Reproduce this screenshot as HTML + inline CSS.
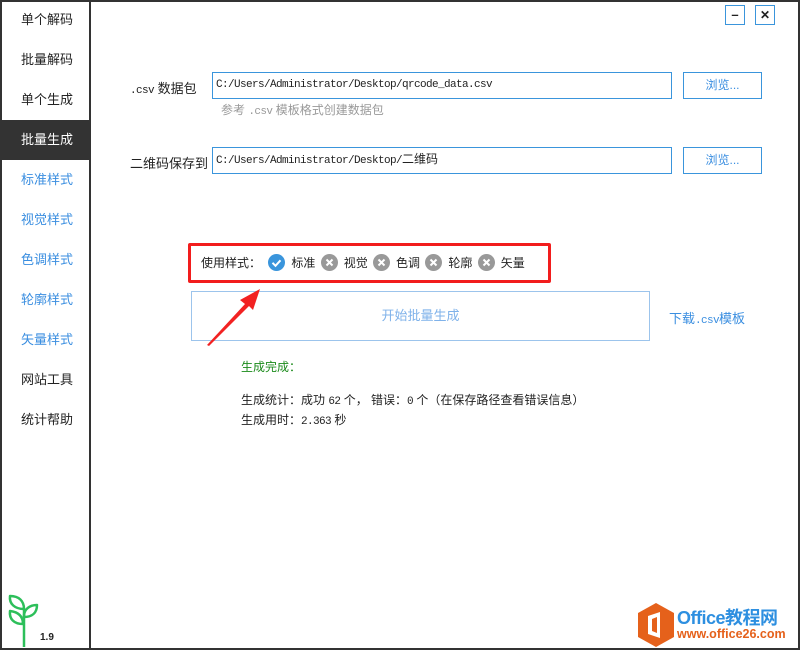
<!DOCTYPE html>
<html><head><meta charset="utf-8"><style>
*{margin:0;padding:0;box-sizing:border-box}
body{width:800px;height:650px;overflow:hidden;background:#fff;font-family:"Liberation Sans","Noto Sans CJK SC",sans-serif;font-size:13px;color:#222;position:relative}
.frame{position:absolute;left:0;top:0;width:800px;height:650px;border:2px solid #333}
.side{position:absolute;left:0;top:0;width:91px;height:650px;border-right:2px solid #333}
.it{position:absolute;left:0;width:89px;height:40px;line-height:40px;padding-left:21px;font-size:13px}
.sel{background:#333;color:#fff}
.blue{color:#3a8ee0}
.a{position:absolute}
.inp{position:absolute;left:212px;width:460px;height:27px;border:1px solid #3a95dc;font-family:"Liberation Mono","Noto Sans CJK SC",monospace;font-size:11px;letter-spacing:-0.6px;line-height:25px;padding-left:3px}
.inp .z{font-size:12px;letter-spacing:0}
.btn{position:absolute;left:683px;width:79px;height:27px;border:1px solid #3a95dc;color:#3a8ee0;text-align:center;line-height:25px;font-size:12px}
.ic{display:inline-block;width:17px;height:17px;border-radius:50%;vertical-align:middle;margin-right:6px;position:relative;top:-1px}
.g{background:#999}
.mono{font-family:"Liberation Mono","Noto Sans CJK SC",monospace;font-size:11px;letter-spacing:-0.6px}
</style></head><body>
<div class="frame"></div>
<div class="side">
<div class="it" style="top:0">单个解码</div>
<div class="it" style="top:40px">批量解码</div>
<div class="it" style="top:80px">单个生成</div>
<div class="it sel" style="top:120px">批量生成</div>
<div class="it blue" style="top:160px">标准样式</div>
<div class="it blue" style="top:200px">视觉样式</div>
<div class="it blue" style="top:240px">色调样式</div>
<div class="it blue" style="top:280px">轮廓样式</div>
<div class="it blue" style="top:320px">矢量样式</div>
<div class="it" style="top:360px">网站工具</div>
<div class="it" style="top:400px">统计帮助</div>
<svg class="a" style="left:6px;top:593px" width="34" height="54" viewBox="0 0 34 54"><g fill="none" stroke="#2dbf5a" stroke-width="2.5" stroke-linejoin="round"><path d="M18 54V16"/><path d="M18 16C18 8 13 3 4 3C3 11 9 16 18 16Z"/><path d="M18 23C18 16 24 12 31 12C31 20 26 24 18 24Z"/><path d="M17 31C17 23 12 19 4 18C3 26 8 31 17 31Z"/></g></svg>
<div class="a" style="left:40px;top:632px;font-size:10px;font-weight:bold">1.9</div>
</div>
<div class="a" style="left:725px;top:5px;width:20px;height:20px;border:1px solid #3a95dc;text-align:center;line-height:17px;font-weight:bold">–</div>
<div class="a" style="left:755px;top:5px;width:20px;height:20px;border:1px solid #3a95dc;text-align:center;line-height:18px;font-weight:bold;font-size:12px">✕</div>

<div class="a" style="left:130px;top:78px"><span class="mono">.csv</span> 数据包</div>
<div class="inp" style="top:72px">C:/Users/Administrator/Desktop/qrcode_data.csv</div>
<div class="btn" style="top:72px">浏览...</div>
<div class="a" style="left:221px;top:101px;color:#999;font-size:12px">参考 <span class="mono">.csv</span> 模板格式创建数据包</div>
<div class="a" style="left:130px;top:153px">二维码保存到</div>
<div class="inp" style="top:147px">C:/Users/Administrator/Desktop/<span class="z">二维码</span></div>
<div class="btn" style="top:147px">浏览...</div>

<div class="a" style="left:188px;top:243px;width:363px;height:40px;border:3px solid #f21d1d;border-radius:2px"></div>
<div class="a" style="left:201px;top:254px;font-size:12px">使用样式：
<span style="margin-left:4px"></span><span class="ic" style="background:#3a95dc"><svg width="17" height="17"><path d="M4.5 8.8l3 3 5-5.5" stroke="#fff" stroke-width="2" fill="none"/></svg></span>标准
<span class="ic g" style="margin-left:2px"><svg width="17" height="17"><path d="M5.5 5.5l6 6M11.5 5.5l-6 6" stroke="#fff" stroke-width="2"/></svg></span>视觉
<span class="ic g" style="margin-left:2px"><svg width="17" height="17"><path d="M5.5 5.5l6 6M11.5 5.5l-6 6" stroke="#fff" stroke-width="2"/></svg></span>色调
<span class="ic g" style="margin-left:2px"><svg width="17" height="17"><path d="M5.5 5.5l6 6M11.5 5.5l-6 6" stroke="#fff" stroke-width="2"/></svg></span>轮廓
<span class="ic g" style="margin-left:2px"><svg width="17" height="17"><path d="M5.5 5.5l6 6M11.5 5.5l-6 6" stroke="#fff" stroke-width="2"/></svg></span>矢量</div>
<div class="a" style="left:191px;top:291px;width:459px;height:50px;border:1px solid #9cc4ec;text-align:center;line-height:48px;color:#7fb2ea">开始批量生成</div>
<svg class="a" style="left:200px;top:285px" width="65" height="65"><path d="M7 60L45 19L40 15L60 4L53 25L49 21L9 61Z" fill="#f22222"/></svg>
<div class="a" style="left:669px;top:308px;color:#3a8ee0">下载<span class="mono">.csv</span>模板</div>
<div class="a" style="left:241px;top:358px;color:#1a8a1a;font-size:12px">生成完成：</div>
<div class="a" style="left:241px;top:391px;font-size:12px">生成统计：成功 <span class="mono">62</span> 个， 错误：<span class="mono">0</span> 个（在保存路径查看错误信息）</div>
<div class="a" style="left:241px;top:411px;font-size:12px">生成用时：<span class="mono">2.363</span> 秒</div>

<svg class="a" style="left:636px;top:602px" width="40" height="46"><path d="M20 1L38 11V35L20 45L2 35V11Z" fill="#e5611b"/><path d="M12 14L24 10V36L12 32Z M16 17V29L21 31V15Z" fill="#fff" fill-rule="evenodd"/></svg>
<div class="a" style="left:677px;top:604px;color:#2d8fe0;font-size:18px;font-weight:bold;letter-spacing:-0.5px">Office教程网</div>
<div class="a" style="left:677px;top:627px;color:#e5611b;font-size:12.5px;font-weight:bold">www.office26.com</div>
</body></html>
